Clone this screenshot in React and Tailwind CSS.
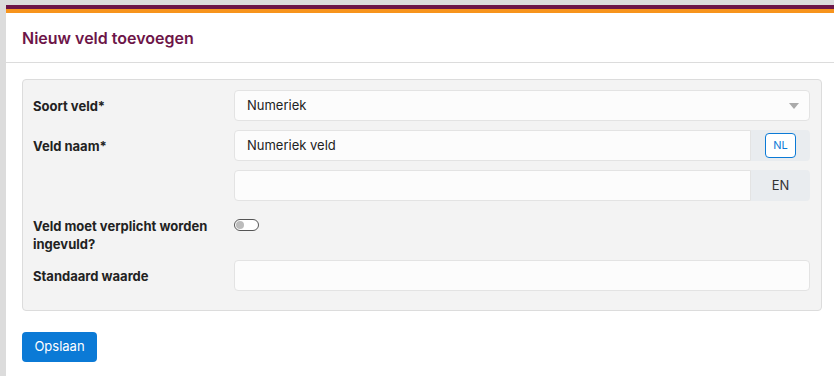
import React from 'react';

const Row = ({ label, children, className = '' }) => (
    <div className={`flex items-center ${className}`}>
        <div className="w-[201px] shrink-0 text-[13px] font-bold leading-[18px] text-[#222]">{label}</div>
        <div className="flex-1">{children}</div>
    </div>
);

export default function App() {
    return (
        <div className="h-[376px] w-[834px] overflow-hidden bg-[#dcdcdc] pl-[6px] pt-[5px] font-['Inter',sans-serif]">
            <div className="w-[832px] h-full bg-white">
                <div className="h-[4px] bg-[#6d1548]" />
                <div className="h-[4px] bg-[#f7941d]" />

                {/* Header */}
                <div className="h-[50px] flex items-center px-4 border-b border-[#dcdcdc]">
                    <h1 className="text-[16px] font-semibold text-[#6d1548]">Nieuw veld toevoegen</h1>
                </div>

                <div className="p-4">
                    <div className="w-[800px] rounded border border-[#dcdcdc] bg-[#f3f3f3] pl-[10px] pr-[11px] pt-[10px] pb-[19px]">
                        <Row label="Soort veld*">
                            <div className="h-[31px] flex items-center justify-between rounded border border-[#e3e3e3] bg-[#fcfcfc] pl-3 pr-[10px] text-[13px] text-[#222]">
                                <span>Numeriek</span>
                                <svg width="10" height="6" viewBox="0 0 10 6"><path d="M0 0h10L5 6z" fill="#aaa" /></svg>
                            </div>
                        </Row>

                        <Row label="Veld naam*" className="mt-[9px]">
                            <div className="flex h-[31px]">
                                <div className="flex-1 flex items-center rounded-l border border-[#e3e3e3] bg-[#fcfcfc] pl-3 text-[13px] text-[#222]">Numeriek veld</div>
                                <div className="w-[59px] flex items-center justify-center rounded-r bg-[#e9ecef]">
                                    <span className="w-[31px] h-[25px] flex items-center justify-center rounded border border-[#0b7ad6] bg-white text-[11px] text-[#0b7ad6]">NL</span>
                                </div>
                            </div>
                        </Row>

                        <Row label="" className="mt-[9px]">
                            <div className="flex h-[31px]">
                                <div className="flex-1 rounded-l border border-[#e3e3e3] bg-[#fcfcfc]" />
                                <div className="w-[59px] flex items-center justify-center rounded-r bg-[#e9ecef] text-[13px] text-[#333]">EN</div>
                            </div>
                        </Row>

                        <div className="flex items-start mt-[16px]">
                            <div className="w-[201px] shrink-0 text-[13px] font-bold leading-[18px] text-[#222]">Veld moet verplicht worden ingevuld?</div>
                            <div className="mt-[2px] w-[25px] h-[12px] rounded-full border border-[#555] bg-white flex items-center pl-[1px]">
                                <div className="w-[8px] h-[8px] rounded-full bg-[#bcbcbc]" />
                            </div>
                        </div>

                        <Row label="Standaard waarde" className="mt-[7px]">
                            <div className="h-[31px] rounded border border-[#e3e3e3] bg-[#fcfcfc]" />
                        </Row>
                    </div>

                    <button className="mt-[21px] h-[30px] w-[75px] rounded bg-[#0b7ad6] text-[13px] text-white">Opslaan</button>
                </div>
            </div>
        </div>
    );
}
